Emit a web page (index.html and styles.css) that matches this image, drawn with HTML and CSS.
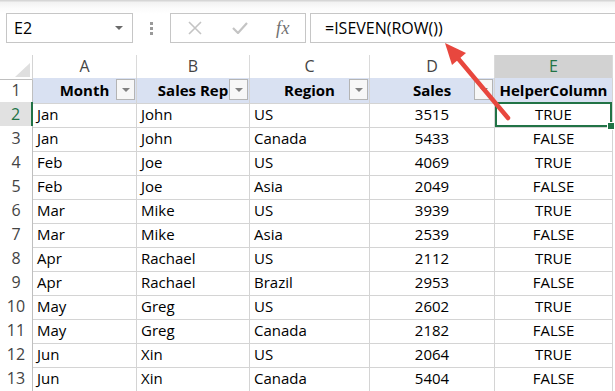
FILE: index.html
```html
<!DOCTYPE html>
<html>
<head>
<meta charset="utf-8">
<link rel="stylesheet" href="styles.css">
</head>
<body>
<div class="app">
  <div class="topbar">
    <div class="namebox"><span class="ref">E2</span><span class="dd"></span></div>
    <div class="grip"><i></i><i></i><i></i></div>
    <div class="fbtns">
      <svg class="ic-x" width="14" height="14" viewBox="0 0 14 14"><path d="M1 1 L13 13 M13 1 L1 13" stroke="#c4c4c4" stroke-width="1.6" fill="none"/></svg>
      <svg class="ic-ok" width="16" height="12" viewBox="0 0 16 12"><path d="M1 6 L6 11 L15 1" stroke="#c4c4c4" stroke-width="2.2" fill="none"/></svg>
      <span class="fx">fx</span>
    </div>
    <div class="finput">=ISEVEN(ROW())</div>
  </div>
  <div class="sheet">
    <div class="row colhead">
      <div class="corner"></div>
      <div class="ch">A</div><div class="ch">B</div><div class="ch">C</div><div class="ch">D</div><div class="ch ch-sel">E</div>
    </div>
    <div class="row">
      <div class="rh">1</div>
      <div class="th"><span>Month</span><b class="fb"></b></div>
      <div class="th"><span>Sales Rep</span><b class="fb"></b></div>
      <div class="th"><span>Region</span><b class="fb"></b></div>
      <div class="th"><span>Sales</span><b class="fb"></b></div>
      <div class="th"><span>HelperColumn</span></div>
    </div>
    <div class="row"><div class="rh rh-sel">2</div><div class="c">Jan</div><div class="c">John</div><div class="c">US</div><div class="c n">3515</div><div class="c n sel">TRUE</div></div>
    <div class="row"><div class="rh">3</div><div class="c">Jan</div><div class="c">John</div><div class="c">Canada</div><div class="c n">5433</div><div class="c n">FALSE</div></div>
    <div class="row"><div class="rh">4</div><div class="c">Feb</div><div class="c">Joe</div><div class="c">US</div><div class="c n">4069</div><div class="c n">TRUE</div></div>
    <div class="row"><div class="rh">5</div><div class="c">Feb</div><div class="c">Joe</div><div class="c">Asia</div><div class="c n">2049</div><div class="c n">FALSE</div></div>
    <div class="row"><div class="rh">6</div><div class="c">Mar</div><div class="c">Mike</div><div class="c">US</div><div class="c n">3939</div><div class="c n">TRUE</div></div>
    <div class="row"><div class="rh">7</div><div class="c">Mar</div><div class="c">Mike</div><div class="c">Asia</div><div class="c n">2539</div><div class="c n">FALSE</div></div>
    <div class="row"><div class="rh">8</div><div class="c">Apr</div><div class="c">Rachael</div><div class="c">US</div><div class="c n">2112</div><div class="c n">TRUE</div></div>
    <div class="row"><div class="rh">9</div><div class="c">Apr</div><div class="c">Rachael</div><div class="c">Brazil</div><div class="c n">2953</div><div class="c n">FALSE</div></div>
    <div class="row"><div class="rh">10</div><div class="c">May</div><div class="c">Greg</div><div class="c">US</div><div class="c n">2602</div><div class="c n">TRUE</div></div>
    <div class="row"><div class="rh">11</div><div class="c">May</div><div class="c">Greg</div><div class="c">Canada</div><div class="c n">2182</div><div class="c n">FALSE</div></div>
    <div class="row"><div class="rh">12</div><div class="c">Jun</div><div class="c">Xin</div><div class="c">US</div><div class="c n">2064</div><div class="c n">TRUE</div></div>
    <div class="row"><div class="rh">13</div><div class="c">Jun</div><div class="c">Xin</div><div class="c">Canada</div><div class="c n">5404</div><div class="c n">FALSE</div></div>
  </div>
  <svg class="arrow" width="615" height="391" viewBox="0 0 615 391">
    <line x1="508" y1="118" x2="456" y2="56" stroke="#e8473e" stroke-width="4.5" stroke-linecap="round"/>
    <polygon points="445,43 466,53 452,65" fill="#e8473e"/>
  </svg>
</div>
</body>
</html>
```

FILE: styles.css
```css
* { box-sizing: border-box; }
html, body { margin: 0; padding: 0; background: #fff; }
body { width: 615px; height: 391px; overflow: hidden; font-family: "Open Sans", "Liberation Sans", sans-serif; }
.app { position: relative; width: 615px; height: 391px; }

.topbar {
  height: 55px;
  display: flex;
  align-items: flex-start;
  padding: 13px 0 0 6px;
  background: linear-gradient(#d6d6d6 0, #d6d6d6 1px, #f2f2f2 2px, #fbfbfb 8px, #ffffff 14px);
}
.namebox {
  width: 127px; height: 30px;
  border: 1px solid #c6c6c6;
  background: #fff;
  display: flex; align-items: center; justify-content: space-between;
  padding: 0 9px 0 7px;
  font-size: 16px; color: #000;
}
.dd { width: 0; height: 0; border-left: 4px solid transparent; border-right: 4px solid transparent; border-top: 4px solid #6a6a6a; }
.grip { width: 37px; height: 30px; display: flex; flex-direction: column; align-items: center; justify-content: center; gap: 2px; }
.grip i { display: block; width: 3px; height: 3px; background: #9a9a9a; }
.fbtns {
  width: 136px; height: 30px;
  border: 1px solid #c6c6c6;
  background: #fff;
  display: flex; align-items: center;
  padding-left: 17px;
}
.ic-x { margin-right: 30px; }
.ic-ok { margin-right: 28px; }
.fx { font-family: "Liberation Serif", serif; font-style: italic; font-size: 18px; color: #707070; letter-spacing: 0.5px; }
.finput {
  flex: 1; height: 30px; margin-left: 4px;
  border: 1px solid #c6c6c6; border-right: none;
  background: #fff;
  padding-left: 14px;
  font-size: 16px; line-height: 28px; color: #000;
}

.sheet { display: flex; flex-direction: column; }
.row {
  display: grid;
  grid-template-columns: 33px 104px 113px 120px 125px 118px;
  height: 24px;
}
.row > div { border-right: 1px solid #d4d4d4; border-bottom: 1px solid #d4d4d4; font-size: 15px; line-height: 25px; white-space: nowrap; }
.colhead { height: 23px; }
.colhead > div { line-height: 23px; border-bottom-color: #bfbfbf; }
.corner { position: relative; background: #fff; }
.corner::after {
  content: ""; position: absolute; right: 2px; bottom: 2px;
  width: 0; height: 0;
  border-left: 15px solid transparent; border-bottom: 14px solid #dfdfdf;
}
.row > .ch { text-align: center; color: #444; background: #fff; border-right-color: #dadada; font-size: 16px; }
.row > .ch-sel { background: #d2d2d2; color: #217346; border-bottom: 2px solid #217346; }
.row > .rh { text-align: center; color: #444; background: #fff; border-right-color: #bfbfbf; font-size: 16px; }
.row > .rh-sel { background: #e1e1e1; color: #217346; border-right: 2px solid #217346; }

.th { position: relative; background: #d9e1f2; font-weight: 700; text-align: center; color: #000; }
.th span { position: relative; z-index: 1; }
.fb {
  position: absolute; right: 1px; top: 1px;
  width: 19px; height: 21px;
  border: 1px solid #b4b4b4;
  background: #f7f7f7;
}
.fb::after {
  content: ""; position: absolute; left: 5px; top: 8px;
  border-left: 4px solid transparent; border-right: 4px solid transparent; border-top: 4px solid #808080;
}
.c { padding-left: 4px; color: #000; }
.c.n { text-align: center; padding-left: 0; }
.sel { position: relative; box-shadow: inset 0 0 0 2px #217346; }
.sel::after {
  content: ""; position: absolute; right: -3px; bottom: -3px;
  width: 6px; height: 6px; background: #217346; border: 1px solid #fff;
}
.arrow { position: absolute; left: 0; top: 0; pointer-events: none; }
```
